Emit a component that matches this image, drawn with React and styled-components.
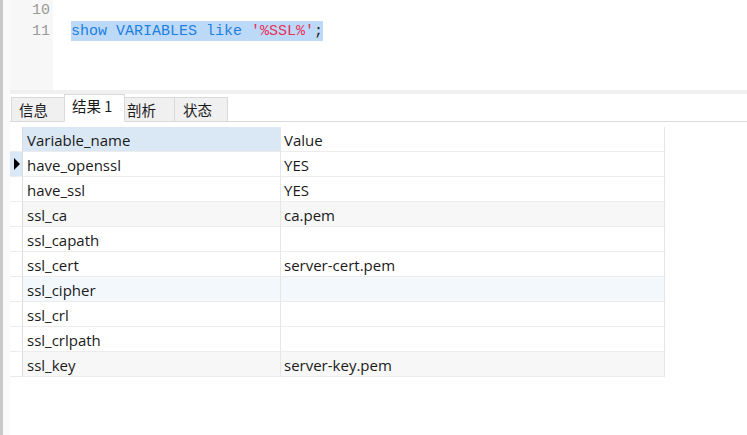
import React from "react";
import styled, { createGlobalStyle } from "styled-components";

const Global = createGlobalStyle`
  html, body { margin: 0; padding: 0; background: #fff; }
  body { width: 747px; height: 435px; overflow: hidden; }
`;

const Window = styled.div`
  display: flex;
  width: 747px;
  height: 435px;
  overflow: hidden;
  background: #fff;
`;
const Edge = styled.div`
  width: 3px;
  background: #c9c9c9;
  flex: none;
`;
const Margin = styled.div`
  width: 7px;
  background: #fafafa;
  flex: none;
`;
const Main = styled.div`
  flex: 1;
  display: flex;
  flex-direction: column;
  min-width: 0;
`;
const Editor = styled.div`
  height: 90px;
  display: flex;
  flex: none;
`;
const Gutter = styled.div`
  width: 43px;
  background: #f7f7f7;
  box-sizing: border-box;
  padding-right: 3px;
  text-align: right;
  font-family: "Liberation Mono", "DejaVu Sans Mono", monospace;
  font-size: 15px;
  line-height: 21px;
  color: #9a9a9a;
`;
const Code = styled.div`
  flex: 1;
  padding-left: 18px;
  font-family: "Liberation Mono", "DejaVu Sans Mono", monospace;
  font-size: 15px;
  line-height: 21px;
  color: #222;
  white-space: pre;
`;
const Line = styled.div`
  height: 21px;
`;
const Sel = styled.span`
  background: #bcdaf8;
  display: inline-block;
  height: 20px;
  line-height: 21px;
`;
const Kw = styled.span`
  color: #1f7fe0;
`;
const Str = styled.span`
  color: #e8305a;
`;
const Separator = styled.div`
  height: 4px;
  background: #f0f0f0;
  flex: none;
`;
const TabBar = styled.div`
  display: flex;
  align-items: flex-end;
  padding-left: 1px;
  border-bottom: 1px solid #d9d9d9;
  flex: none;
  box-sizing: border-box;
  height: 28px;
`;
const Tab = styled.div`
  box-sizing: border-box;
  width: ${(p) => p.$w}px;
  height: ${(p) => (p.$active ? 28 : 24)}px;
  margin-bottom: ${(p) => (p.$active ? -1 : 0)}px;
  background: ${(p) => (p.$active ? "#fff" : "#f0f0f0")};
  border: 1px solid #d9d9d9;
  border-bottom: ${(p) => (p.$active ? "1px solid #fff" : "none")};
  margin-left: ${(p) => (p.$first ? 0 : -1)}px;
  position: relative;
  z-index: ${(p) => (p.$active ? 1 : 0)};
  padding-left: ${(p) => p.$pl}px;
  font-family: "Noto Sans CJK SC", "Noto Sans", sans-serif;
  font-size: 14.5px;
  line-height: ${(p) => (p.$active ? 22 : 23)}px;
  color: #1a1a1a;
`;
const GridWrap = styled.div`
  padding-top: 5px;
`;
const Grid = styled.div`
  display: grid;
  grid-template-columns: 13px 258px 384px;
  width: 655px;
`;
const Cell = styled.div`
  box-sizing: border-box;
  height: 25px;
  border-bottom: 1px solid #ececec;
  border-right: 1px solid #e6e6e6;
  background: ${(p) => p.$bg || "#fff"};
  padding-left: ${(p) => p.$pl ?? 3}px;
  font-family: "Open Sans", "Noto Sans", sans-serif;
  font-size: 15px;
  line-height: 26px;
  color: #1a1a1a;
  white-space: nowrap;
  overflow: hidden;
`;
const Marker = styled.div`
  box-sizing: border-box;
  height: 25px;
  border-bottom: 1px solid #ececec;
  border-right: 1px solid #dcdcdc;
  background: ${(p) => (p.$current ? "#d9e8f7" : "#fff")};
  display: flex;
  align-items: center;
  padding-left: 4px;
`;
const Arrow = styled.div`
  width: 0;
  height: 0;
  border-top: 6px solid transparent;
  border-bottom: 6px solid transparent;
  border-left: 6px solid #000;
`;

const rows = [
  ["have_openssl", "YES"],
  ["have_ssl", "YES"],
  ["ssl_ca", "ca.pem"],
  ["ssl_capath", ""],
  ["ssl_cert", "server-cert.pem"],
  ["ssl_cipher", ""],
  ["ssl_crl", ""],
  ["ssl_crlpath", ""],
  ["ssl_key", "server-key.pem"],
];
const rowBg = (i) => (i === 5 ? "#f3f8fd" : i === 2 || i === 8 ? "#f7f7f7" : "#fff");

const tabs = [
  { label: "信息", w: 54, pl: 7 },
  { label: "结果 1", w: 61, pl: 7, active: true },
  { label: "剖析", w: 51, pl: 2 },
  { label: "状态", w: 54, pl: 8 },
];

export default function App() {
  return (
    <Window>
      <Global />
      <Edge />
      <Margin />
      <Main>
        <Editor>
          <Gutter>
            <Line>10</Line>
            <Line>11</Line>
          </Gutter>
          <Code>
            <Line />
            <Line>
              <Sel>
                <Kw>show</Kw> <Kw>VARIABLES</Kw> <Kw>like</Kw> <Str>'%SSL%'</Str>;
              </Sel>
            </Line>
          </Code>
        </Editor>
        <Separator />
        <TabBar>
          {tabs.map((t, i) => (
            <Tab key={t.label} $w={t.w} $pl={t.pl} $active={t.active} $first={i === 0}>
              {t.label}
            </Tab>
          ))}
        </TabBar>
        <GridWrap>
          <Grid>
            <Marker />
            <Cell $bg="#dae8f6" $pl={4}>Variable_name</Cell>
            <Cell>Value</Cell>
            {rows.map(([k, v], i) => (
              <React.Fragment key={k}>
                <Marker $current={i === 0}>{i === 0 && <Arrow />}</Marker>
                <Cell $bg={rowBg(i)} $pl={4}>{k}</Cell>
                <Cell $bg={rowBg(i)}>{v}</Cell>
              </React.Fragment>
            ))}
          </Grid>
        </GridWrap>
      </Main>
    </Window>
  );
}
